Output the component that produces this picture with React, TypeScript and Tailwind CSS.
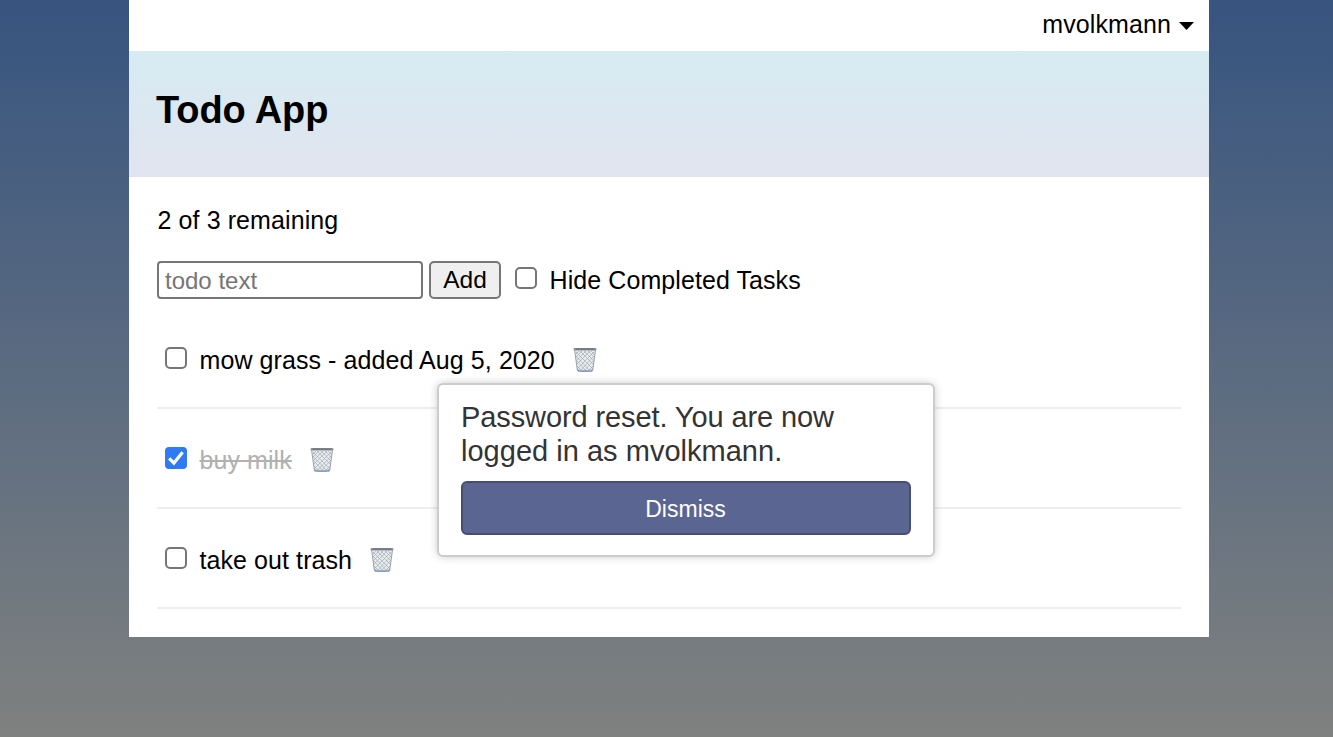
import { useState } from 'react';

function Trash() {
  return (
    <svg viewBox="0 0 24 26" className="block h-[26px] w-6 shrink-0">
      <path d="M1.6 2.5 4.4 24.2Q12 25.4 19.7 24.2L22.5 2.5Z" fill="#e8ebee" />
      <g stroke="#9ba1a9" strokeWidth=".6" fill="none">
        <path d="m3 5 17 17M3 9l14 15M4 14l9 10M4 19l5 5M7 4l14 14M11 4l10 10M15 4l6 6M18 4l4 4" />
        <path d="M21 5 4 22M21 9 7 24M20 14 11 24M20 19l-5 5M17 4 3 18M13 4 3 14M9 4l-6 6M6 4 3 7" />
      </g>
      <path d="M1.6 3 4.4 23.5M22.5 3 19.7 23.5" stroke="#9aa0a8" strokeWidth="1" fill="none" />
      <path d="M4.2 22.5Q12 23.7 19.8 22.5L19.4 24.4Q12 25.5 4.7 24.4Z" fill="#7890a8" />
      <path d="M6 23.9h12" stroke="#b5cade" strokeWidth=".8" />
      <rect x=".5" y="1" width="23" height="2.5" rx="1" fill="#8d949d" />
      <path d="M2.5 2.1h19" stroke="#5b616a" strokeWidth=".9" />
    </svg>
  );
}

function Check({ checked, onChange }: { checked: boolean; onChange: () => void }) {
  return (
    <button
      role="checkbox"
      aria-checked={checked}
      onClick={onChange}
      className={
        checked
          ? 'flex size-[22px] shrink-0 items-center justify-center rounded-[4px] bg-[#2f7bf6]'
          : 'block size-[22px] shrink-0 rounded-[5px] border-2 border-[#767676] bg-white'
      }
    >
      {checked && (
        <svg viewBox="0 0 22 22" className="size-[22px]" fill="none">
          <path d="m4.2 11.3 4.7 4.8L17.6 5.2" stroke="white" strokeWidth="3.2" />
        </svg>
      )}
    </button>
  );
}

const initial = [
  { id: 1, text: 'mow grass - added Aug 5, 2020', done: false, width: 'w-[355.5px]' },
  { id: 2, text: 'buy milk', done: true, width: 'w-[92.5px]' },
  { id: 3, text: 'take out trash', done: false, width: 'w-[152.5px]' },
];

export default function App() {
  const [todos, setTodos] = useState(initial);
  const [hide, setHide] = useState(false);
  const [open, setOpen] = useState(true);
  const toggle = (id: number) =>
    setTodos(todos.map((t) => (t.id === id ? { ...t, done: !t.done } : t)));

  return (
    <div className="flex h-[737px] items-start bg-linear-to-b from-[#37547f] to-[#7f817f] pl-[129px] font-['Liberation_Sans',Arial,sans-serif] text-[25px] leading-[30px] text-black">
      <div className="relative h-[637px] w-[1080px] bg-white">
        <div className="flex h-[51px] items-start justify-end pt-[9px] pr-[15px]">
          <span className="tracking-[0.1px]">mvolkmann</span>
          <svg viewBox="0 0 15 8" className="mt-[13px] ml-2 h-2 w-[15px]">
            <path d="M0 0h15L7.5 8z" />
          </svg>
        </div>
        <header className="h-[126px] bg-linear-to-b from-[#d6ebf2] to-[#e1e4ef] pt-[35px] pl-[27px]">
          <h1 className="text-[38px] leading-[48px] font-bold tracking-[-0.1px]">Todo App</h1>
        </header>
        <main className="px-7 pt-7">
          <p className="pl-[0.5px] tracking-[0.1px]">2 of 3 remaining</p>
          <div className="mt-[26px] flex h-[38px]">
            <input
              placeholder="todo text"
              className="h-[38px] w-[266px] rounded-[4px] border-2 border-[#767676] px-[6px] pt-[2px] text-[24px] placeholder:text-[#757575]"
            />
            <button className="ml-[6px] h-[38px] w-[72px] rounded-[5px] border-2 border-[#767676] bg-[#efefef] text-[24.5px]">
              Add
            </button>
            <div className="mt-[6px] ml-[14px]">
              <Check checked={hide} onChange={() => setHide(!hide)} />
            </div>
            <span className="mt-1 ml-[12.5px] tracking-[0.08px]">Hide Completed Tasks</span>
          </div>
          <ul className="mt-[10px]">
            {todos
              .filter((t) => !hide || !t.done)
              .map((t) => (
                <li
                  key={t.id}
                  className="flex h-[100px] items-start border-b-2 border-[#eeeeee] pt-9 pl-2"
                >
                  <div className="mt-[2px]">
                    <Check checked={t.done} onChange={() => toggle(t.id)} />
                  </div>
                  <span
                    className={`ml-[12.5px] whitespace-nowrap tracking-[0.08px] ${t.width} ${t.done ? 'text-[#b1b1b1] line-through' : ''}`}
                  >
                    {t.text}
                  </span>
                  <button aria-label="Delete" className="mt-[2px] ml-[18px]">
                    <Trash />
                  </button>
                </li>
              ))}
          </ul>
        </main>
        {open && (
          <div className="absolute top-[383px] left-[308px] h-[174px] w-[498px] rounded-[6px] border-2 border-[#cccccc] bg-white px-[22px] pt-[15px] text-[#333333] shadow-[0_0_8px_rgba(0,0,0,0.2)]">
            <p className="text-[29px] leading-[34px] tracking-[-0.1px]">
              Password reset. You are now
              <br />
              <span className="tracking-[0.02px]">logged in as mvolkmann.</span>
            </p>
            <button
              onClick={() => setOpen(false)}
              className="mt-[13px] h-[54px] w-[450px] rounded-[6px] border-2 border-[#464e73] bg-[#5b6592] pt-[2px] pr-[1px] text-[23px] text-white"
            >
              Dismiss
            </button>
          </div>
        )}
      </div>
    </div>
  );
}
